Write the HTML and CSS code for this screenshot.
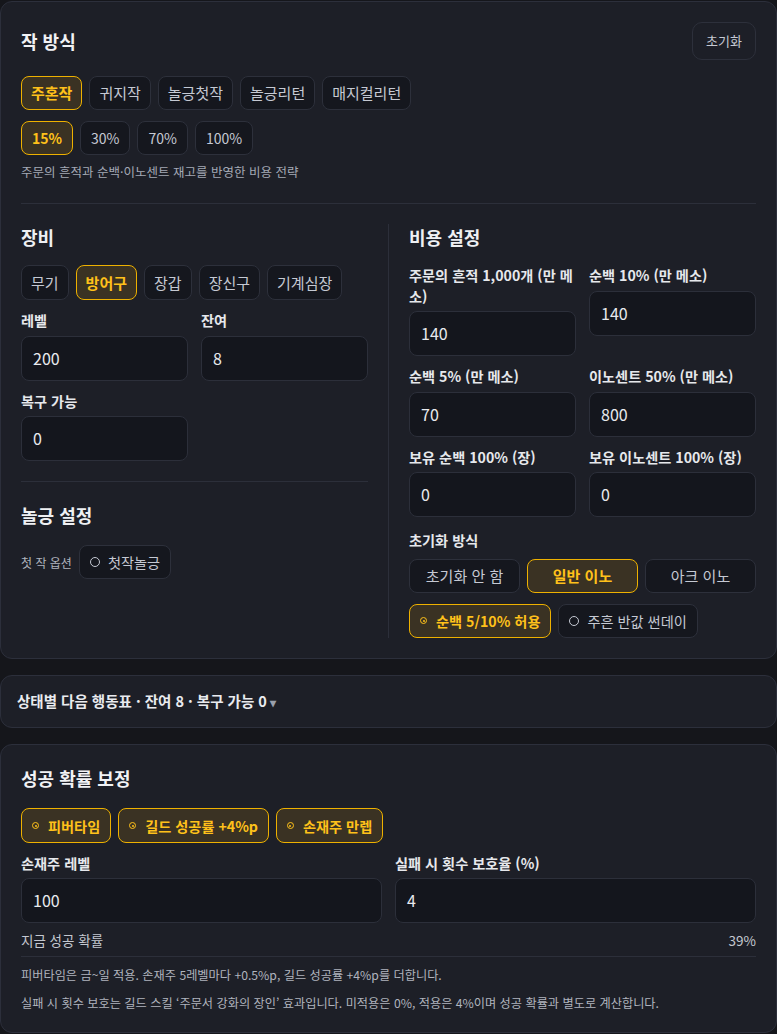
FILE: index.html
```html
<!DOCTYPE html>
<html lang="ko">
<head>
<meta charset="utf-8">
<title>작 방식</title>
<link rel="stylesheet" href="styles.css">
</head>
<body>
<section class="card main">
  <div class="card-head">
    <h2 class="title">작 방식</h2>
    <button class="btn reset">초기화</button>
  </div>
  <div class="chips chips-mode">
    <button class="btn active">주혼작</button>
    <button class="btn">귀지작</button>
    <button class="btn">놀긍첫작</button>
    <button class="btn">놀긍리턴</button>
    <button class="btn">매지컬리턴</button>
  </div>
  <div class="chips chips-pct">
    <button class="btn active">15%</button>
    <button class="btn">30%</button>
    <button class="btn">70%</button>
    <button class="btn">100%</button>
  </div>
  <p class="desc">주문의 흔적과 순백·이노센트 재고를 반영한 비용 전략</p>
  <hr class="divider">
  <div class="cols">
    <div class="col col-left">
      <h3 class="sub">장비</h3>
      <div class="chips chips-equip">
        <button class="btn">무기</button>
        <button class="btn active">방어구</button>
        <button class="btn">장갑</button>
        <button class="btn">장신구</button>
        <button class="btn">기계심장</button>
      </div>
      <div class="fields">
        <label class="field"><span class="lbl">레벨</span><span class="input">200</span></label>
        <label class="field"><span class="lbl">잔여</span><span class="input">8</span></label>
        <label class="field"><span class="lbl">복구 가능</span><span class="input">0</span></label>
      </div>
      <hr class="divider div-left">
      <h3 class="sub">놀긍 설정</h3>
      <div class="opt-row">
        <span class="small">첫 작 옵션</span>
        <button class="btn toggle"><span class="radio"></span>첫작놀긍</button>
      </div>
    </div>
    <div class="col col-right">
      <h3 class="sub">비용 설정</h3>
      <div class="fields">
        <label class="field"><span class="lbl">주문의 흔적 1,000개 (만 메소)</span><span class="input">140</span></label>
        <label class="field"><span class="lbl">순백 10% (만 메소)</span><span class="input">140</span></label>
        <label class="field"><span class="lbl">순백 5% (만 메소)</span><span class="input">70</span></label>
        <label class="field"><span class="lbl">이노센트 50% (만 메소)</span><span class="input">800</span></label>
        <label class="field"><span class="lbl">보유 순백 100% (장)</span><span class="input">0</span></label>
        <label class="field"><span class="lbl">보유 이노센트 100% (장)</span><span class="input">0</span></label>
      </div>
      <div class="lbl lbl-init">초기화 방식</div>
      <div class="tri">
        <button class="btn">초기화 안 함</button>
        <button class="btn active">일반 이노</button>
        <button class="btn">아크 이노</button>
      </div>
      <div class="chips chips-opts">
        <button class="btn toggle active"><span class="radio on"></span>순백 5/10% 허용</button>
        <button class="btn toggle"><span class="radio"></span>주흔 반값 썬데이</button>
      </div>
    </div>
  </div>
</section>

<section class="card summary">
  <span class="sum-text">상태별 다음 행동표 · 잔여 8 · 복구 가능 0</span><span class="caret">▾</span>
</section>

<section class="card prob">
  <h2 class="title">성공 확률 보정</h2>
  <div class="chips chips-prob">
    <button class="btn toggle active"><span class="radio on"></span>피버타임</button>
    <button class="btn toggle active"><span class="radio on"></span>길드 성공률 +4%p</button>
    <button class="btn toggle active"><span class="radio on"></span>손재주 만렙</button>
  </div>
  <div class="fields">
    <label class="field"><span class="lbl">손재주 레벨</span><span class="input">100</span></label>
    <label class="field"><span class="lbl">실패 시 횟수 보호율 (%)</span><span class="input">4</span></label>
  </div>
  <div class="result"><span>지금 성공 확률</span><span>39%</span></div>
  <p class="note">피버타임은 금~일 적용. 손재주 5레벨마다 +0.5%p, 길드 성공률 +4%p를 더합니다.</p>
  <p class="note">실패 시 횟수 보호는 길드 스킬 ‘주문서 강화의 장인’ 효과입니다. 미적용은 0%, 적용은 4%이며 성공 확률과 별도로 계산합니다.</p>
</section>
</body>
</html>
```
FILE: styles.css
```css
* { box-sizing: border-box; }
html, body { margin: 0; padding: 0; }
body {
  background: #15161b;
  color: #e9ebef;
  font-family: "Noto Sans CJK KR", "Noto Sans", sans-serif;
  padding-top: 1px;
}
.card {
  background: #1d1f27;
  border: 1px solid #2c2f3b;
  border-radius: 12px;
}
.main { padding: 20px; }
.card-head {
  display: flex;
  justify-content: space-between;
  align-items: center;
}
.title {
  margin: 0;
  font-size: 18px;
  line-height: 26px;
  font-weight: 700;
  color: #f1f2f5;
}
.btn {
  font-family: inherit;
  font-size: 15px;
  line-height: 20px;
  color: #c5c9d3;
  background: #15171e;
  border: 1px solid #2d303b;
  border-radius: 8px;
  padding: 6px 9px;
  cursor: pointer;
  white-space: nowrap;
}
.btn.active {
  background: #3a3223;
  border-color: #eeb100;
  color: #ffc11a;
  font-weight: 700;
}
.reset {
  background: #1d1f27;
  font-size: 13px;
  padding: 8px 13px;
  border-radius: 10px;
}
.chips { display: flex; gap: 7px; flex-wrap: wrap; }
.chips-mode { margin-top: 16px; }
.chips-pct { margin-top: 11px; }
.chips-pct .btn { font-size: 14px; padding-left: 10px; padding-right: 10px; }
.desc {
  margin: 8px 0 0;
  font-size: 12.5px;
  line-height: 18px;
  color: #a4a9b5;
}
.divider {
  border: 0;
  border-top: 1px solid #2c2f3a;
  margin: 22px 0 0;
}
.cols { display: flex; padding-top: 20px; }
.col { flex: 1 1 0; min-width: 0; }
.col-left { padding-right: 20px; }
.col-right { border-left: 1px solid #2c2f3a; padding-left: 20px; }
.sub {
  margin: 1px 0 16px;
  font-size: 18px;
  line-height: 24px;
  font-weight: 700;
  color: #eef0f3;
}
.chips-equip .btn { padding-top: 7px; padding-bottom: 6px; }
.fields {
  display: grid;
  grid-template-columns: 1fr 1fr;
  column-gap: 13px;
  row-gap: 10px;
  align-items: start;
}
.chips-equip + .fields { margin-top: 10px; }
.field { display: flex; flex-direction: column; }
.lbl {
  font-size: 14.2px;
  line-height: 20.5px;
  font-weight: 700;
  color: #e6e8ec;
  margin-bottom: 5px;
  word-break: break-all;
}
.input {
  display: block;
  height: 45px;
  background: #14161d;
  border: 1px solid #2c2f3a;
  border-radius: 8px;
  padding: 0 11px;
  font-size: 16px;
  line-height: 43px;
  color: #e8eaee;
}
.div-left { margin-top: 20px; }
.div-left + .sub { margin-top: 21px; margin-bottom: 18px; }
.opt-row { display: flex; align-items: center; gap: 7px; }
.small { font-size: 12px; color: #b0b4be; }
.toggle { display: inline-flex; align-items: center; gap: 8px; padding: 6px 10px; font-size: 14.2px; }
.radio {
  display: inline-block;
  width: 10px;
  height: 10px;
  border: 1px solid currentColor;
  border-radius: 50%;
  flex: none;
}
.radio.on {
  width: 7px;
  height: 7px;
  position: relative;
  margin: 0 1px 0 0;
}
.radio.on::after {
  content: "";
  position: absolute;
  left: 1.5px;
  top: 1.5px;
  width: 2px;
  height: 2px;
  border-radius: 50%;
  background: currentColor;
}
.lbl-init { margin-top: 13px; margin-bottom: 8px; }
.tri { display: grid; grid-template-columns: 1fr 1fr 1fr; gap: 7px; }
.tri .btn { padding: 6px 4px; }
.chips-opts { margin-top: 11px; }
.summary {
  margin-top: 16px;
  padding: 15px 16px;
  font-size: 14.5px;
  line-height: 20px;
  font-weight: 700;
  color: #e9ebef;
}
.caret { color: #9aa0ac; font-size: 12px; margin-left: 3px; }
.prob { margin-top: 16px; padding: 20px; }
.chips-prob { margin-top: 17px; }
.chips-prob .btn { padding-top: 7px; padding-bottom: 6px; }
.chips-prob + .fields { margin-top: 10px; }
.result {
  display: flex;
  justify-content: space-between;
  margin-top: 8px;
  padding-bottom: 7px;
  border-bottom: 1px solid #2c2f3a;
  font-size: 13.5px;
  line-height: 18px;
  color: #c4c8d0;
}
.note {
  margin: 9px 0 0;
  font-size: 12.2px;
  line-height: 18px;
  color: #b0b4be;
}
.note + .note { margin-top: 10px; }
```
